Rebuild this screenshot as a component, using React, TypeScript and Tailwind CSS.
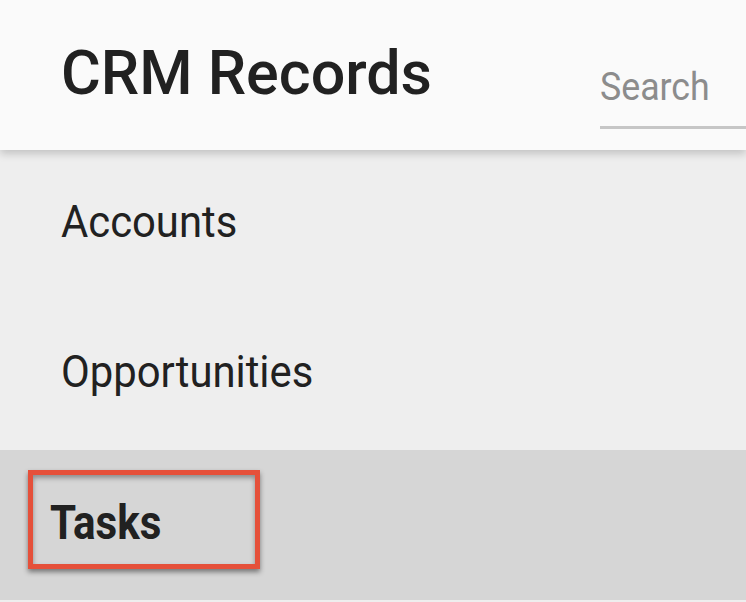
export default function App() {
  const items = ['Accounts', 'Opportunities'];
  return (
    <div className="w-[746px] h-[602px] overflow-hidden bg-[#eeeeee] font-['Roboto',sans-serif] text-[#212121]">
      <header className="relative z-10 h-[150px] bg-[#fafafa] shadow-[0_4px_8px_rgba(0,0,0,0.18)] flex items-center justify-between pl-[61px]">
        <h1 className="text-[61px] font-medium leading-none -mt-[4px]">CRM Records</h1>
        <div className="w-[146px] self-stretch flex flex-col justify-end pb-[21px]">
          <div className="pb-[20px] leading-none">
            <span className="inline-block origin-left scale-x-[0.94] text-[38px] text-[#8c8c8c] leading-none">Search</span>
          </div>
          <div className="h-[3px] bg-[#c6c6c6]" />
        </div>
      </header>
      <nav className="flex flex-col">
        {items.map((label) => (
          <div key={label} className="h-[150px] flex items-center pl-[61px]">
            <span className="inline-block origin-left scale-x-[0.95] text-[44px] leading-none -mt-[7px]">{label}</span>
          </div>
        ))}
        <div className="h-[150px] bg-[#d6d6d6] flex items-center pl-[28px]">
          <div className="w-[232px] h-[99px] -mt-[11px] border-[5px] border-[#e5503a] shadow-[0_3px_5px_rgba(0,0,0,0.45),inset_0_3px_5px_rgba(0,0,0,0.35)] flex items-center pl-[17px]">
            <span className="inline-block origin-left scale-x-[0.86] text-[49px] font-bold leading-none mt-[6px]">Tasks</span>
          </div>
        </div>
      </nav>
    </div>
  );
}
